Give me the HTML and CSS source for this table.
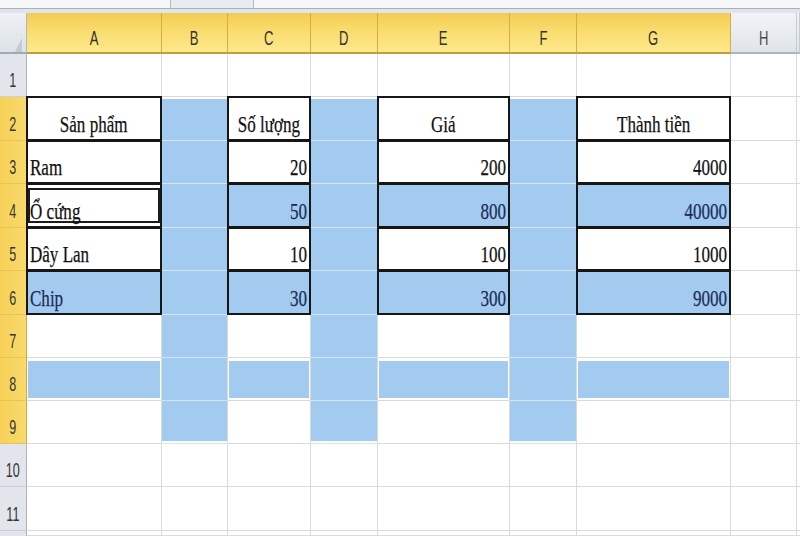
FILE: index.html
```html
<!DOCTYPE html>
<html lang="vi">
<head>
<meta charset="utf-8">
<title>Bảng tính</title>
<link rel="stylesheet" href="styles.css">
</head>
<body>
<div class="topbar"><div class="tb1"></div><div class="tb2"></div><div class="tb3"></div></div>
<div class="strip"></div>
<div class="sheet">
  <!-- header row -->
  <div class="corner"><svg width="27" height="41" viewBox="0 0 27 41"><polygon points="22,25 22,45 12,45" fill="#c3c9d0"/></svg></div>
  <div class="ch"><span class="h">A</span></div>
  <div class="ch"><span class="h">B</span></div>
  <div class="ch"><span class="h">C</span></div>
  <div class="ch"><span class="h">D</span></div>
  <div class="ch"><span class="h">E</span></div>
  <div class="ch"><span class="h">F</span></div>
  <div class="ch"><span class="h">G</span></div>
  <div class="ch off"><span class="h">H</span></div>
  <div class="ch off"></div>

  <!-- row 1 -->
  <div class="rh"><span class="n">1</span></div>
  <div class="c"></div><div class="c"></div><div class="c"></div><div class="c"></div><div class="c"></div><div class="c"></div><div class="c"></div><div class="c"></div><div class="c"></div>

  <!-- row 2 -->
  <div class="rh sel"><span class="n">2</span></div>
  <div class="c tb m"><span class="t">Sản phẩm</span></div>
  <div class="c s st"></div>
  <div class="c tb m"><span class="t">Số lượng</span></div>
  <div class="c s st"></div>
  <div class="c tb m"><span class="t">Giá</span></div>
  <div class="c s st"></div>
  <div class="c tb m"><span class="t">Thành tiền</span></div>
  <div class="c"></div><div class="c"></div>

  <!-- row 3 -->
  <div class="rh sel"><span class="n">3</span></div>
  <div class="c tb"><span class="t">Ram</span></div>
  <div class="c s"></div>
  <div class="c tb r"><span class="t">20</span></div>
  <div class="c s"></div>
  <div class="c tb r"><span class="t">200</span></div>
  <div class="c s"></div>
  <div class="c tb r"><span class="t">4000</span></div>
  <div class="c"></div><div class="c"></div>

  <!-- row 4 -->
  <div class="rh sel"><span class="n">4</span></div>
  <div class="c tb act"><span class="t">Ổ cứng</span></div>
  <div class="c s"></div>
  <div class="c tb r s"><span class="t">50</span></div>
  <div class="c s"></div>
  <div class="c tb r s"><span class="t">800</span></div>
  <div class="c s"></div>
  <div class="c tb r s"><span class="t">40000</span></div>
  <div class="c"></div><div class="c"></div>

  <!-- row 5 -->
  <div class="rh sel"><span class="n">5</span></div>
  <div class="c tb"><span class="t">Dây Lan</span></div>
  <div class="c s"></div>
  <div class="c tb r"><span class="t">10</span></div>
  <div class="c s"></div>
  <div class="c tb r"><span class="t">100</span></div>
  <div class="c s"></div>
  <div class="c tb r"><span class="t">1000</span></div>
  <div class="c"></div><div class="c"></div>

  <!-- row 6 -->
  <div class="rh sel"><span class="n">6</span></div>
  <div class="c tb s"><span class="t">Chip</span></div>
  <div class="c s"></div>
  <div class="c tb r s"><span class="t">30</span></div>
  <div class="c s"></div>
  <div class="c tb r s"><span class="t">300</span></div>
  <div class="c s"></div>
  <div class="c tb r s"><span class="t">9000</span></div>
  <div class="c"></div><div class="c"></div>

  <!-- row 7 -->
  <div class="rh sel"><span class="n">7</span></div>
  <div class="c"></div><div class="c s"></div><div class="c"></div><div class="c s"></div><div class="c"></div><div class="c s"></div><div class="c"></div><div class="c"></div><div class="c"></div>

  <!-- row 8 -->
  <div class="rh sel"><span class="n">8</span></div>
  <div class="c s s8"></div><div class="c s"></div><div class="c s s8"></div><div class="c s"></div><div class="c s s8"></div><div class="c s"></div><div class="c s s8"></div><div class="c"></div><div class="c"></div>

  <!-- row 9 -->
  <div class="rh sel"><span class="n">9</span></div>
  <div class="c"></div><div class="c s sb"></div><div class="c"></div><div class="c s sb"></div><div class="c"></div><div class="c s sb"></div><div class="c"></div><div class="c"></div><div class="c"></div>

  <!-- row 10 -->
  <div class="rh"><span class="n">10</span></div>
  <div class="c"></div><div class="c"></div><div class="c"></div><div class="c"></div><div class="c"></div><div class="c"></div><div class="c"></div><div class="c"></div><div class="c"></div>

  <!-- row 11 -->
  <div class="rh"><span class="n">11</span></div>
  <div class="c"></div><div class="c"></div><div class="c"></div><div class="c"></div><div class="c"></div><div class="c"></div><div class="c"></div><div class="c"></div><div class="c"></div>

  <!-- row 12 (cut off by window edge) -->
  <div class="rh"></div>
  <div class="c"></div><div class="c"></div><div class="c"></div><div class="c"></div><div class="c"></div><div class="c"></div><div class="c"></div><div class="c"></div><div class="c"></div>
</div>
</body>
</html>
```

FILE: styles.css
```css
* { box-sizing: border-box; }

html, body {
  margin: 0;
  padding: 0;
  background: #ffffff;
}

body {
  width: 800px;
  height: 536px;
  overflow: hidden;
}

/* top bar (bottom edge of formula bar) */
.topbar {
  height: 9px;
  display: flex;
  background: #f6f7f9;
  border-bottom: 1px solid #a9b0b8;
}
.tb1 { width: 171px; border-right: 1px solid #b3bac2; }
.tb2 { width: 83px; background: #e8ebef; border-right: 1px solid #b3bac2; }
.tb3 { flex: 1; }

.strip {
  height: 4px;
  background: #dfe5ec;
}

/* sheet grid */
.sheet {
  display: grid;
  grid-template-columns: 27px 135px 66px 83px 67px 132px 67px 154px 66px 3px;
  grid-template-rows: 41px 43px 44px 43px 44px 43px 44px 43px 43px 43px 43px 44px 5px;
  overflow: hidden;
}

/* corner */
.corner {
  background: linear-gradient(#eef1f5, #dde2e8);
  border-right: 1px solid #aeb7c2;
  border-bottom: 2px solid #9faab7;
  overflow: hidden;
}
.corner svg { display: block; }

/* column headers */
.ch {
  display: flex;
  justify-content: center;
  align-items: flex-end;
  padding-bottom: 4px;
  background: linear-gradient(#f4cb52 0%, #f9dc6e 45%, #fde88c 100%);
  border-right: 1px solid #d5ac45;
  border-bottom: 2px solid #c29c3e;
  font-family: "Liberation Sans", Arial, sans-serif;
  font-size: 21px;
  line-height: 21px;
  color: #333333;
  overflow: hidden;
}
.ch.off {
  background: linear-gradient(#f1f3f6, #e0e4ea);
  border-right: 1px solid #c3cbd4;
  border-bottom: 2px solid #a9b6c4;
  color: #4a4a4a;
}
.h {
  display: inline-block;
  transform: scaleX(0.62);
  transform-origin: center bottom;
}

/* row headers */
.rh {
  display: flex;
  justify-content: center;
  align-items: flex-end;
  padding-bottom: 6px;
  background: #e2e6ec;
  border-right: 1px solid #a9b3bf;
  border-bottom: 1px solid #c9d0d9;
  font-family: "Liberation Sans", Arial, sans-serif;
  font-size: 21px;
  line-height: 21px;
  color: #363636;
  overflow: hidden;
}
.rh.sel {
  background: linear-gradient(90deg, #f6d058, #f9da6c);
  border-right: 1px solid #cfa848;
  border-bottom: 1px solid #e8c25a;
}
.n {
  display: inline-block;
  transform: scaleX(0.6);
  transform-origin: center bottom;
}

/* cells */
.c {
  position: relative;
  display: flex;
  align-items: flex-end;
  padding: 0 3px 4px 3px;
  border-right: 1px solid #dadada;
  border-bottom: 1px solid #dadada;
  font-family: "Liberation Serif", "Times New Roman", serif;
  font-size: 24px;
  line-height: 24px;
  color: #111111;
  white-space: nowrap;
}
.c.m { justify-content: center; }
.c.r { justify-content: flex-end; }

.t {
  display: inline-block;
  transform: scaleX(0.71);
  transform-origin: left bottom;
  -webkit-text-stroke: 0.25px currentColor;
}
.c.m .t { transform-origin: center bottom; }
.c.r .t { transform-origin: right bottom; }

/* selection fill */
.c.s {
  background: #a3cbf0;
  border-bottom-color: #d3e5f7;
  color: #1b2c58;
}
.c.st { box-shadow: inset 0 2px 0 #ffffff; }
.c.sb { box-shadow: inset 0 -2px 0 #ffffff; }
.c.s8 {
  box-shadow: inset 0 3px 0 #ffffff, inset 0 -2px 0 #ffffff, inset 1px 0 0 #ffffff, inset -1px 0 0 #ffffff;
  border-bottom-color: #dadada;
}

/* table borders */
.c.tb::after {
  content: "";
  position: absolute;
  left: -1px;
  top: -1px;
  right: -1px;
  bottom: -1px;
  border: 2px solid #161616;
  pointer-events: none;
}

/* active cell frame */
.c.act::before {
  content: "";
  position: absolute;
  left: 1px;
  right: 1px;
  top: 4px;
  bottom: 4px;
  border: 2px solid #1c1c1c;
}
```
